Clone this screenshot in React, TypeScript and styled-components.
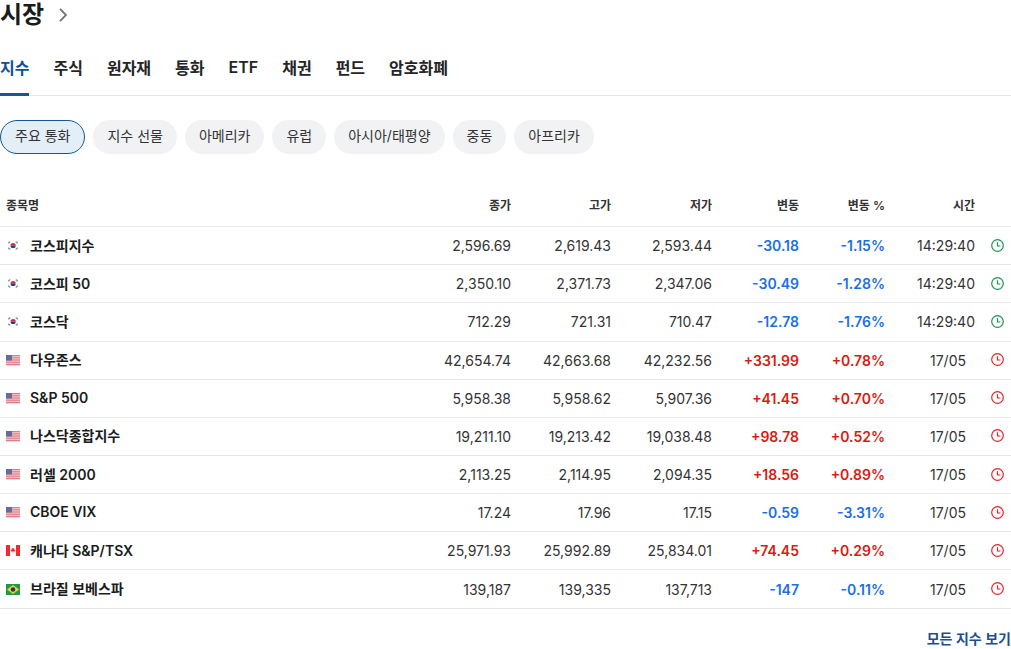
import React from 'react';
import styled, { createGlobalStyle } from 'styled-components';

const GlobalStyle = createGlobalStyle`
  html, body {
    margin: 0;
    padding: 0;
    background: #fff;
    overflow: hidden;
  }
  body {
    font-family: Inter, "Noto Sans CJK KR", sans-serif;
    color: #181c21;
  }
`;

const Page = styled.div`
  width: 1011px;
  height: 649px;
  overflow: hidden;
`;

const TitleRow = styled.div`
  display: flex;
  align-items: center;
  gap: 13px;
  height: 30px;
`;

const Title = styled.h1`
  margin: 0;
  font-size: 24px;
  line-height: 30px;
  font-weight: 700;
  color: #181c21;
`;

const Tabs = styled.nav`
  display: flex;
  gap: 24px;
  margin-top: 8px;
  height: 57px;
  border-bottom: 1px solid #e6e9eb;
  box-sizing: content-box;
`;

const Tab = styled.a<{ $active?: boolean }>`
  display: flex;
  align-items: center;
  height: 58px;
  font-size: 16px;
  font-weight: 600;
  color: ${({ $active }) => ($active ? '#0f4f9c' : '#232526')};
  border-bottom: 3px solid ${({ $active }) => ($active ? '#1256a0' : 'transparent')};
  box-sizing: border-box;
  margin-bottom: -1px;
  padding-top: 2px;
`;

const Chips = styled.div`
  display: flex;
  gap: 8px;
  margin-top: 24px;
`;

const Chip = styled.button<{ $active?: boolean }>`
  height: 34px;
  padding: 0 14px 5px;
  border-radius: 17px;
  border: ${({ $active }) => ($active ? '1px solid #1256a0' : 'none')};
  background: ${({ $active }) => ($active ? '#e4eef7' : '#f1f2f3')};
  color: #333;
  font-family: inherit;
  font-size: 14px;
  font-weight: 400;
`;

const Table = styled.table`
  width: 1011px;
  margin-top: 33px;
  border-collapse: collapse;
  table-layout: fixed;
`;

const Head = styled.th<{ $left?: boolean }>`
  height: 39.55px;
  padding: 0 0 4px;
  box-sizing: border-box;
  font-size: 12px;
  font-weight: 600;
  color: #333;
  text-align: ${({ $left }) => ($left ? 'left' : 'right')};
  padding-left: ${({ $left }) => ($left ? '6px' : '0')};
  border-bottom: 1px solid #e6e9eb;
`;

const Row = styled.tr`
  height: 38.17px;
  border-bottom: 1px solid #e6e9eb;
`;

const Cell = styled.td`
  padding: 0;
  font-size: 14px;
  color: #333;
  text-align: right;
`;

const NameCell = styled.td`
  padding: 0 0 0 6px;
`;

const Name = styled.div`
  display: flex;
  align-items: center;
  gap: 10px;
  font-size: 14px;
  font-weight: 600;
  color: #181c21;
`;

const NameText = styled.span`
  margin-top: -2px;
`;

const ChangeCell = styled(Cell)<{ $up: boolean }>`
  font-weight: 600;
  color: ${({ $up }) => ($up ? '#da1a10' : '#1a6fe8')};
`;

const TimeCell = styled(Cell)<{ $live: boolean }>`
  padding-right: ${({ $live }) => ($live ? '0' : '9px')};
`;

const IconCell = styled.td`
  padding: 0 7px 0 0;
  text-align: right;
`;

const Footer = styled.div`
  display: flex;
  justify-content: flex-end;
  margin-top: 19px;
`;

const MoreLink = styled.a`
  font-size: 14px;
  font-weight: 600;
  color: #1d4f8c;
`;

const Chevron = () => (
  <svg width="12" height="16" viewBox="0 0 12 16" fill="none" stroke="#6e7379" strokeWidth="1.8">
    <path d="M3 1.8 L9 8 L3 14.2" />
  </svg>
);

const Clock = ({ color }: { color: string }) => (
  <svg width="13" height="13" viewBox="0 0 13 13" fill="none" stroke={color} strokeWidth="1.2">
    <circle cx="6.5" cy="6.5" r="5.8" />
    <path d="M6.5 3.2 V7 H9.4" />
  </svg>
);

const KoreaFlag = () => (
  <svg width="14" height="11" viewBox="0 0 14 11">
    <rect width="14" height="11" fill="#fff" />
    <path d="M4.5 5.5 a2.6 2.6 0 0 1 5.2 0 z" fill="#e3213f" />
    <path d="M4.5 5.5 a2.6 2.6 0 0 0 5.2 0 z" fill="#1d3f94" />
    <path d="M2 2.8 L4 1.4 M2.5 3.4 L4.5 2 M10 1.4 L12 2.8 M9.5 2 L11.5 3.4 M2 8.2 L4 9.6 M2.5 7.6 L4.5 9 M10 9.6 L12 8.2 M9.5 9 L11.5 7.6" stroke="#666" strokeWidth="0.7" />
  </svg>
);

const UsFlag = () => (
  <svg width="14" height="11" viewBox="0 0 14 11">
    <rect width="14" height="11" fill="#f5d0d3" />
    {[0, 2.2, 4.4, 6.6, 8.8].map((y) => (
      <rect key={y} y={y} width="14" height="1.2" fill="#e47d89" />
    ))}
    <rect width="6" height="5.5" fill="#666b98" />
  </svg>
);

const CanadaFlag = () => (
  <svg width="14" height="11" viewBox="0 0 14 11">
    <rect width="14" height="11" fill="#fff" />
    <rect width="4" height="11" fill="#f5282f" />
    <rect x="10" width="4" height="11" fill="#f5282f" />
    <path d="M7 2.4 L7.8 3.8 L8.6 3.6 L8.4 5 L9.4 5 L8.8 6.6 L7.2 6.6 L7.2 8 L6.8 8 L6.8 6.6 L5.2 6.6 L4.6 5 L5.6 5 L5.4 3.6 L6.2 3.8 Z" fill="#f5282f" />
  </svg>
);

const BrazilFlag = () => (
  <svg width="14" height="11" viewBox="0 0 14 11">
    <rect width="14" height="11" fill="#1a9a4a" />
    <path d="M7 1 L13 5.5 L7 10 L1 5.5 Z" fill="#f5d327" />
    <circle cx="7" cy="5.5" r="2.3" fill="#26327a" />
  </svg>
);

type Flag = 'kr' | 'us' | 'ca' | 'br';

const flags: Record<Flag, React.FC> = {
  kr: KoreaFlag,
  us: UsFlag,
  ca: CanadaFlag,
  br: BrazilFlag,
};

const rows: { flag: Flag; name: string; values: string[]; change: string; percent: string; time: string }[] = [
  { flag: 'kr', name: '코스피지수', values: ['2,596.69', '2,619.43', '2,593.44'], change: '-30.18', percent: '-1.15%', time: '14:29:40' },
  { flag: 'kr', name: '코스피 50', values: ['2,350.10', '2,371.73', '2,347.06'], change: '-30.49', percent: '-1.28%', time: '14:29:40' },
  { flag: 'kr', name: '코스닥', values: ['712.29', '721.31', '710.47'], change: '-12.78', percent: '-1.76%', time: '14:29:40' },
  { flag: 'us', name: '다우존스', values: ['42,654.74', '42,663.68', '42,232.56'], change: '+331.99', percent: '+0.78%', time: '17/05' },
  { flag: 'us', name: 'S&P 500', values: ['5,958.38', '5,958.62', '5,907.36'], change: '+41.45', percent: '+0.70%', time: '17/05' },
  { flag: 'us', name: '나스닥종합지수', values: ['19,211.10', '19,213.42', '19,038.48'], change: '+98.78', percent: '+0.52%', time: '17/05' },
  { flag: 'us', name: '러셀 2000', values: ['2,113.25', '2,114.95', '2,094.35'], change: '+18.56', percent: '+0.89%', time: '17/05' },
  { flag: 'us', name: 'CBOE VIX', values: ['17.24', '17.96', '17.15'], change: '-0.59', percent: '-3.31%', time: '17/05' },
  { flag: 'ca', name: '캐나다 S&P/TSX', values: ['25,971.93', '25,992.89', '25,834.01'], change: '+74.45', percent: '+0.29%', time: '17/05' },
  { flag: 'br', name: '브라질 보베스파', values: ['139,187', '139,335', '137,713'], change: '-147', percent: '-0.11%', time: '17/05' },
];

const tabs = ['지수', '주식', '원자재', '통화', 'ETF', '채권', '펀드', '암호화폐'];
const chips = ['주요 통화', '지수 선물', '아메리카', '유럽', '아시아/태평양', '중동', '아프리카'];
const columnWidths = [411, 100, 100, 101, 87, 86, 90, 36];

export default function App() {
  return (
    <Page>
      <GlobalStyle />
      <TitleRow>
        <Title>시장</Title>
        <Chevron />
      </TitleRow>
      <Tabs>
        {tabs.map((tab, i) => (
          <Tab key={tab} $active={i === 0}>{tab}</Tab>
        ))}
      </Tabs>
      <Chips>
        {chips.map((chip, i) => (
          <Chip key={chip} $active={i === 0}>{chip}</Chip>
        ))}
      </Chips>
      <Table>
        <colgroup>
          {columnWidths.map((w, i) => (
            <col key={i} width={w} />
          ))}
        </colgroup>
        <thead>
          <tr>
            <Head $left>종목명</Head>
            <Head>종가</Head>
            <Head>고가</Head>
            <Head>저가</Head>
            <Head>변동</Head>
            <Head>변동 %</Head>
            <Head>시간</Head>
            <Head />
          </tr>
        </thead>
        <tbody>
          {rows.map((row) => {
            const FlagIcon = flags[row.flag];
            const up = row.change.startsWith('+');
            const live = row.flag === 'kr';
            return (
              <Row key={row.name}>
                <NameCell>
                  <Name>
                    <FlagIcon />
                    <NameText>{row.name}</NameText>
                  </Name>
                </NameCell>
                {row.values.map((value, i) => (
                  <Cell key={i}>{value}</Cell>
                ))}
                <ChangeCell $up={up}>{row.change}</ChangeCell>
                <ChangeCell $up={up}>{row.percent}</ChangeCell>
                <TimeCell $live={live}>{row.time}</TimeCell>
                <IconCell>
                  <Clock color={live ? '#1f9254' : '#e0252b'} />
                </IconCell>
              </Row>
            );
          })}
        </tbody>
      </Table>
      <Footer>
        <MoreLink>모든 지수 보기</MoreLink>
      </Footer>
    </Page>
  );
}
